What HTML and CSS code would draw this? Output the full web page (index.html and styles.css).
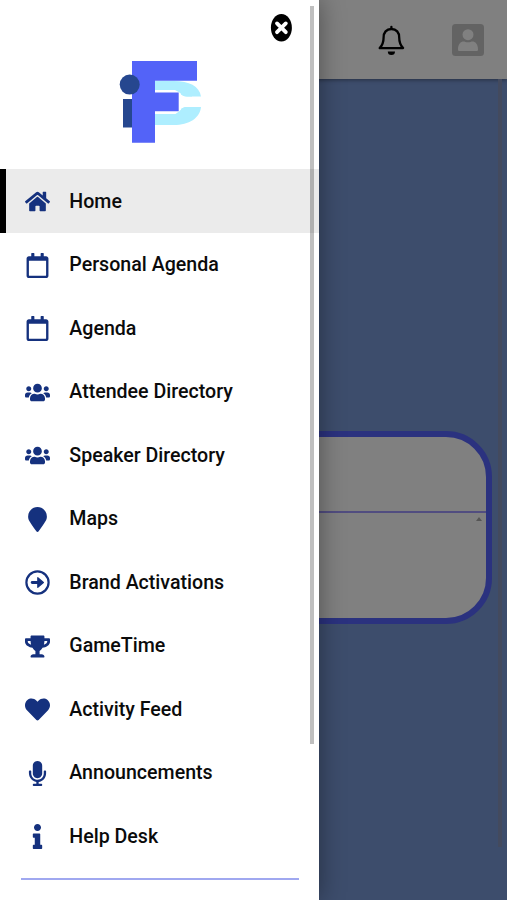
FILE: index.html
```
<!DOCTYPE html>
<html lang="en">
<head>
<meta charset="utf-8">
<meta name="viewport" content="width=device-width, initial-scale=1">
<title>Home</title>
<link rel="stylesheet" href="styles.css">
</head>
<body>
<svg class="defs" aria-hidden="true">
  <symbol id="calendar" viewBox="0 0 448 512"><path d="M400 64h-48V12c0-6.600-5.400-12-12-12h-40c-6.600 0-12 5.400-12 12v52H160V12c0-6.600-5.400-12-12-12h-40c-6.600 0-12 5.400-12 12v52H48C21.500 64 0 85.500 0 112v352c0 26.500 21.500 48 48 48h352c26.500 0 48-21.500 48-48V112c0-26.500-21.500-48-48-48zm-6 400H54c-3.300 0-6-2.700-6-6V160h352v298c0 3.300-2.700 6-6 6z"/></symbol>
  <symbol id="users" viewBox="0 0 640 512"><path d="M96 224c35.300 0 64-28.700 64-64s-28.700-64-64-64-64 28.700-64 64 28.700 64 64 64zm448 0c35.300 0 64-28.700 64-64s-28.700-64-64-64-64 28.700-64 64 28.700 64 64 64zm32 32h-64c-17.600 0-33.500 7.100-45.100 18.600 40.300 22.100 68.900 62 75.100 109.400h66c17.700 0 32-14.300 32-32v-32c0-35.300-28.700-64-64-64zm-256 0c61.900 0 112-50.100 112-112S381.900 32 320 32 208 82.100 208 144s50.100 112 112 112zm76.800 32h-8.300c-20.800 10-43.900 16-68.500 16s-47.600-6-68.500-16h-8.300C179.600 288 128 339.600 128 403.200V432c0 26.500 21.500 48 48 48h288c26.500 0 48-21.500 48-48v-28.800c0-63.600-51.600-115.200-115.200-115.200zm-223.700-13.400C161.500 263.100 145.600 256 128 256H64c-35.300 0-64 28.700-64 64v32c0 17.700 14.300 32 32 32h65.900c6.300-47.400 34.900-87.300 75.200-109.400z"/></symbol>
</svg>

<div class="page">
  <header class="topbar">
    <svg class="bell" viewBox="0 0 28 32"><path d="M14.400 2.800v2M14.400 5C9.300 5 6.600 8.500 6.600 13.500c0 5.500-1 7.600-3.900 10.600h23.400c-2.900-3-3.900-5.100-3.900-10.600C22.200 8.500 19.500 5 14.400 5z" fill="none" stroke="#000" stroke-width="2.300" stroke-linecap="round" stroke-linejoin="round"/><path d="M10.800 27.400h7.200a3.600 3.600 0 0 1-7.200 0z"/></svg>
    <svg class="avatar" viewBox="0 0 32 32"><rect width="32" height="32" rx="3.500" fill="#636363"/><circle cx="16" cy="10.700" r="5.500" fill="#808080"/><path d="M6 25.500C6 20 8.800 17.500 11.500 17.500c1.300 0 2 .8 4.500.8s3.200-.8 4.500-.8c2.700 0 5.500 2.500 5.500 8 0 1-.6 1.500-1.500 1.500h-17c-.9 0-1.500-.5-1.500-1.500z" fill="#808080"/></svg>
  </header>
  <main class="content">
    <section class="card">
      <div class="card-head"></div>
      <div class="card-body"><i class="caret"></i></div>
    </section>
    <div class="page-scroll"></div>
  </main>
</div>

<aside class="drawer">
  <div class="brand">
    <svg class="logo" viewBox="0 0 86 86">
      <path d="M36 23h19c15 0 25.500 5 27 15.500H68C62 38.500 60 33 52 33H36zM36 67h19c15 0 26-7 27-18H68C61 49 59 55.500 50 55.500H36z" fill="#aeeeff"/>
      <path d="M36 32h26v24H36z" fill="#fff"/>
      <path d="M60 34.200c3 2.200 4.500 4.300 8 4.300h5V32H56zM60 53.500c3-2.500 4-4.500 8-4.500h5v8H55z" fill="#aeeeff"/>
      <path d="M4 41h10v28.500H4z" fill="#26478f"/>
      <path d="M13 3h65v19.700H36v11.800h23.700v18.800H36v31.500H13z" fill="#5363f8"/>
      <circle cx="10.700" cy="26.600" r="10" fill="#26478f"/>
    </svg>
    <svg class="close" viewBox="0 0 22 28"><ellipse cx="11.400" cy="13.800" rx="10.500" ry="13.700"/><path d="M7 9.400l8.800 8.800M15.800 9.400L7 18.200" stroke="#fff" stroke-width="3.800" stroke-linecap="round"/></svg>
  </div>
  <nav class="menu">
    <a class="item active"><svg class="icon" viewBox="0 0 576 512"><path d="M280.400 148.300L96 300.100V464a16 16 0 0 0 16 16l112.100-.3a16 16 0 0 0 15.900-16V368a16 16 0 0 1 16-16h64a16 16 0 0 1 16 16v95.600a16 16 0 0 0 16 16.100L464 480a16 16 0 0 0 16-16V300L295.700 148.300a12.200 12.200 0 0 0-15.300 0zM571.600 251.500L488 182.600V44.100a12 12 0 0 0-12-12h-56a12 12 0 0 0-12 12v72.600L318.500 43a48 48 0 0 0-61 0L4.300 251.500a12 12 0 0 0-1.600 16.900l25.500 31a12 12 0 0 0 16.900 1.600L280.400 107.200a12.200 12.200 0 0 1 15.300 0L530.900 301a12 12 0 0 0 16.900-1.600l25.500-31a12 12 0 0 0-1.700-16.900z"/></svg>Home</a>
    <a class="item"><svg class="icon"><use href="#calendar"/></svg>Personal Agenda</a>
    <a class="item"><svg class="icon"><use href="#calendar"/></svg>Agenda</a>
    <a class="item"><svg class="icon"><use href="#users"/></svg>Attendee Directory</a>
    <a class="item"><svg class="icon"><use href="#users"/></svg>Speaker Directory</a>
    <a class="item"><svg class="icon" viewBox="0 0 384 512"><path d="M172.300 501.700C27 291 0 269.400 0 192 0 86 86 0 192 0s192 86 192 192c0 77.400-27 99-172.300 309.700-9.500 13.800-29.900 13.800-39.400 0z"/></svg>Maps</a>
    <a class="item"><svg class="icon" viewBox="0 0 25 25"><circle cx="12.500" cy="12.500" r="11.100" fill="none" stroke="#15317e" stroke-width="2.200"/><path d="M7.200 12.500h7" fill="none" stroke="#15317e" stroke-width="2.800" stroke-linecap="round"/><path d="M12.800 7.700l5.600 4.800-5.600 4.800z" stroke="#15317e" stroke-width="1.200" stroke-linejoin="round"/></svg>Brand Activations</a>
    <a class="item"><svg class="icon" viewBox="0 0 576 512"><path d="M552 64H448V24c0-13.300-10.700-24-24-24H152c-13.300 0-24 10.700-24 24v40H24C10.700 64 0 74.700 0 88v56c0 35.700 22.500 72.400 61.900 100.700 31.500 22.700 69.800 37.100 110 41.700C203.300 338.500 240 360 240 360v72h-48c-35.300 0-64 20.700-64 56v12c0 6.600 5.400 12 12 12h296c6.600 0 12-5.400 12-12v-12c0-35.300-28.700-56-64-56h-48v-72s36.700-21.500 68.100-73.600c40.300-4.600 78.600-19 110-41.700 39.300-28.300 61.900-65 61.900-100.700V88c0-13.300-10.700-24-24-24zM99.300 192.800C74.900 175.200 64 155.600 64 144v-16h64.200c1 32.600 5.800 61.200 12.800 86.200-15.100-5.200-29.200-12.400-41.700-21.400zM512 144c0 16.100-17.700 36.100-35.300 48.800-12.500 9-26.700 16.200-41.800 21.400 7-25 11.800-53.600 12.800-86.200H512v16z"/></svg>GameTime</a>
    <a class="item"><svg class="icon" viewBox="0 0 512 512"><path d="M462.300 62.600C407.500 15.900 326 24.300 275.700 76.200L256 96.500l-19.700-20.300C186.100 24.300 104.500 15.900 49.700 62.600c-62.800 53.600-66.100 149.800-9.900 207.900l193.500 199.800c12.500 12.900 32.800 12.900 45.300 0l193.500-199.800c56.300-58.100 53-154.300-9.800-207.900z"/></svg>Activity Feed</a>
    <a class="item"><svg class="icon" viewBox="0 0 352 512"><path d="M176 352c53 0 96-43 96-96V96c0-53-43-96-96-96S80 43 80 96v160c0 53 43 96 96 96zm160-160h-16c-8.800 0-16 7.200-16 16v48c0 74.800-64.500 134.800-140.800 127.400C96.700 376.900 48 317.100 48 250.300V208c0-8.800-7.200-16-16-16H16c-8.800 0-16 7.200-16 16v40.200c0 89.600 64 169.600 152 181.700V464H96c-8.800 0-16 7.200-16 16v16c0 8.800 7.200 16 16 16h160c8.800 0 16-7.200 16-16v-16c0-8.800-7.200-16-16-16h-56v-33.800C285.700 418.500 352 344.900 352 256v-48c0-8.800-7.200-16-16-16z"/></svg>Announcements</a>
    <a class="item"><svg class="icon" viewBox="0 0 192 512"><path d="M20 424.200h20V279.800H20c-11 0-20-9-20-20V212c0-11 9-20 20-20h112c11 0 20 9 20 20v212.200h20c11 0 20 9 20 20V492c0 11-9 20-20 20H20c-11 0-20-9-20-20v-47.800c0-11 9-20 20-20zM96 0C56.200 0 24 32.200 24 72s32.200 72 72 72 72-32.200 72-72S135.800 0 96 0z"/></svg>Help Desk</a>
  </nav>
  <hr class="divider">
  <div class="drawer-scroll"></div>
</aside>
</body>
</html>
```
FILE: styles.css
```
* { box-sizing: border-box; }
body {
  margin: 0;
  height: 900px;
  overflow: hidden;
  position: relative;
  font-family: Roboto, "Liberation Sans", sans-serif;
  background: #3d4d6c;
}
.defs { position: absolute; width: 0; height: 0; }

.page { height: 900px; display: flex; flex-direction: column; }
.topbar {
  height: 79px;
  flex: none;
  display: flex;
  justify-content: flex-end;
  align-items: center;
  gap: 47px;
  padding-right: 23px;
  background: #808080;
  box-shadow: 0 1px 4px rgba(0, 0, 0, .4);
}
.bell { width: 28px; height: 32px; }
.avatar { width: 32px; height: 32px; }
.content { position: relative; flex: 1; padding: 352px 15px 0 16px; }
.card {
  height: 193px;
  border: 6px solid #2b327f;
  border-radius: 46px;
  background: #808080;
  overflow: hidden;
}
.card-head { height: 76px; border-bottom: 2px solid #514d80; }
.card-body { display: flex; justify-content: flex-end; padding: 4px 4px 0 0; }
.caret {
  border: 3px solid transparent;
  border-top-width: 0;
  border-bottom: 4px solid #555;
}
.page-scroll {
  position: absolute;
  top: 0;
  right: 5px;
  width: 4px;
  height: 768px;
  background: #434a5e;
}

.drawer {
  position: absolute;
  top: 0;
  left: 0;
  width: 319px;
  height: 900px;
  background: #fff;
  box-shadow: 0 0 24px rgba(0, 0, 0, .4);
}
.brand {
  height: 169.5px;
  display: flex;
  justify-content: space-between;
  align-items: flex-start;
  padding: 14px 27px 0 119px;
}
.logo { width: 86px; height: 86px; margin-top: 44px; }
.close { width: 22px; height: 28px; }
.menu { margin-top: -.3px; }
.item {
  height: 63.5px;
  display: flex;
  align-items: center;
  gap: 19.3px;
  padding: 2px 0 0 25px;
  font-size: 19.6px;
  font-weight: 500;
  line-height: 24px;
  color: #0b0b0b;
}
.active { background: #ebebeb; border-left: 6px solid #000; padding-left: 19px; }
.icon { width: 25px; height: 25px; fill: #15317e; flex: none; }
.divider { height: 2px; border: 0; margin: 10px 20px 0 21px; background: #a0a8f0; }
.drawer-scroll {
  position: absolute;
  top: 6px;
  right: 5px;
  width: 4px;
  height: 738px;
  background: rgba(0, 0, 0, .25);
}
```
